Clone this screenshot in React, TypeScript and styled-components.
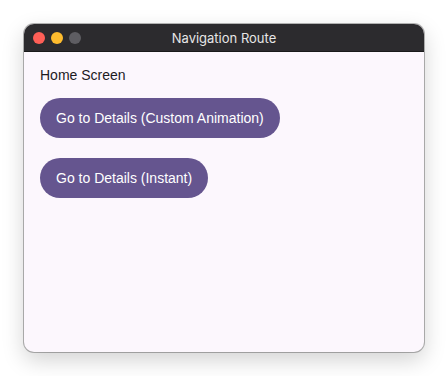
import React from 'react';
import styled, { createGlobalStyle } from 'styled-components';

const GlobalStyle = createGlobalStyle`
  html, body {
    margin: 0;
    padding: 0;
    background: #ffffff;
    font-family: 'Liberation Sans', Arial, sans-serif;
  }
`;

const Page = styled.div`
  width: 448px;
  height: 376px;
  padding: 24px;
  box-sizing: border-box;
`;

const Window = styled.div`
  width: 400px;
  height: 328px;
  border-radius: 10px;
  overflow: hidden;
  display: flex;
  flex-direction: column;
  background: #fcf7fd;
  box-shadow: 0 0 0 1px rgba(0, 0, 0, 0.28), 0 8px 22px rgba(0, 0, 0, 0.18);
`;

const TitleBar = styled.div`
  height: 28px;
  flex: none;
  background: #2c2b2e;
  position: relative;
  display: flex;
  align-items: center;
  justify-content: center;
  border-bottom: 1px solid #1a1a1a;
  box-sizing: border-box;
`;

const Lights = styled.div`
  position: absolute;
  left: 9px;
  top: 8px;
  display: flex;
  gap: 6px;
`;

const Light = styled.span<{ $color: string }>`
  width: 12px;
  height: 12px;
  border-radius: 50%;
  background: ${p => p.$color};
`;

const Title = styled.div`
  color: #e6e6e6;
  font-size: 13px;
  font-family: 'Inter', 'Liberation Sans', sans-serif;
`;

const Content = styled.div`
  flex: 1;
  padding: 14px 16px;
  display: flex;
  flex-direction: column;
  align-items: flex-start;
`;

const Heading = styled.p`
  margin: 0 0 14px;
  font-size: 14px;
  color: #1c1b1f;
  line-height: 18px;
`;

const Button = styled.button`
  height: 40px;
  padding: 0 16px;
  border: none;
  border-radius: 20px;
  background: #65558f;
  color: #ffffff;
  font-family: 'Liberation Sans', Arial, sans-serif;
  font-size: 14px;
  margin-bottom: 20px;
  cursor: pointer;
`;

const App: React.FC = () => {
  return (
    <Page>
      <GlobalStyle />
      <Window>
        <TitleBar>
          <Lights>
            <Light $color="#fe5f57" />
            <Light $color="#febc2e" />
            <Light $color="#5e5d62" />
          </Lights>
          <Title>Navigation Route</Title>
        </TitleBar>
        <Content>
          <Heading>Home Screen</Heading>
          <Button>Go to Details (Custom Animation)</Button>
          <Button>Go to Details (Instant)</Button>
        </Content>
      </Window>
    </Page>
  );
};

export default App;
